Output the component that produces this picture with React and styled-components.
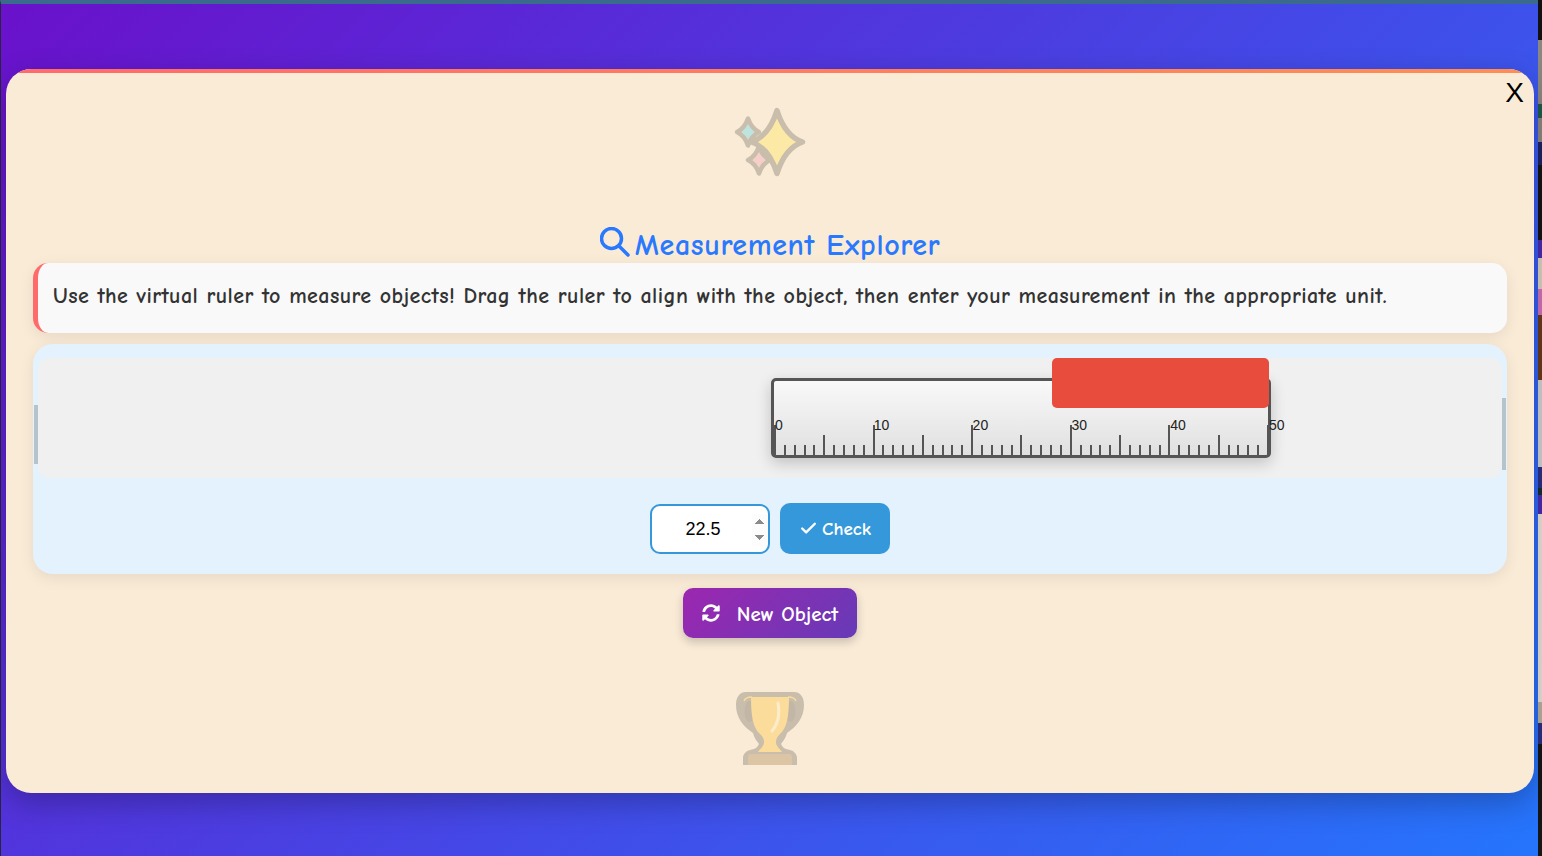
import styled, { createGlobalStyle } from "styled-components";
import { FaSyncAlt } from "react-icons/fa";
import { Check } from "lucide-react";

const GlobalStyle = createGlobalStyle`
  html, body {
    margin: 0;
    padding: 0;
    height: 100%;
    overflow: hidden;
    font-family: "Comic Sans MS", "Comic Neue", Lato, sans-serif;
  }
  * {
    box-sizing: border-box;
  }
`;

const Page = styled.div`
  width: 1542px;
  height: 856px;
  display: flex;
  overflow: hidden;
`;

const Main = styled.div`
  flex: 1;
  border-top: 4px solid #3a6a8c;
  border-left: 1px solid #2b2440;
  padding: 65px 4px 0 5px;
  background: linear-gradient(135deg, #6a11cb 0%, #2575fc 100%);
`;

const WindowEdge = styled.div`
  width: 4px;
  background: linear-gradient(
    180deg,
    #111 0 40px,
    #8a8780 40px 104px,
    #1f5c4c 104px 118px,
    #8a8780 118px 142px,
    #1c2460 142px 165px,
    #141414 165px 240px,
    #4a2bb0 240px 258px,
    #d8d0bc 258px 289px,
    #d070b8 289px 315px,
    #6a3a1c 315px 380px,
    #cfcfcf 380px 467px,
    #2a3080 467px 488px,
    #16302c 488px 495px,
    #4a2bb0 495px 514px,
    #e6e0d8 514px 702px,
    #b8ae9c 702px 723px,
    #2a3080 723px 744px,
    #161616 744px 856px
  );
`;

const Modal = styled.div`
  position: relative;
  height: 724px;
  padding: 33px 27px 0;
  border-radius: 25px;
  background: #faebd7;
  box-shadow: 0 10px 30px rgba(0, 0, 0, 0.25);
  overflow: hidden;
  display: flex;
  flex-direction: column;
  align-items: center;

  &::before {
    content: "";
    position: absolute;
    top: 0;
    left: 0;
    right: 0;
    height: 4px;
    background: linear-gradient(90deg, #ff6b6b, #ff8e53);
  }
`;

const CloseButton = styled.button`
  position: absolute;
  top: 8px;
  right: 10px;
  padding: 0;
  border: none;
  background: none;
  color: #000;
  font-family: "Liberation Sans", sans-serif;
  font-size: 28px;
  line-height: 32px;
  cursor: pointer;
`;

const Decoration = styled.svg`
  display: block;
  flex: none;
`;

const TrophyIcon = styled(Decoration)`
  margin-top: 52px;
`;

const Title = styled.h2`
  margin: 41px 0 0;
  width: 100%;
  height: 40px;
  padding-top: 4px;
  display: flex;
  align-items: center;
  justify-content: center;
  gap: 5px;
  color: #2979ff;
  font-size: 30px;
  font-weight: 700;
  letter-spacing: 0.65px;
  white-space: nowrap;
`;

const SearchIcon = styled.svg`
  flex: none;
  margin-top: -6px;
`;

const Intro = styled.p`
  width: 100%;
  height: 70px;
  margin: 0 0 11px;
  padding: 0 15px 4px;
  display: flex;
  align-items: center;
  border-left: 5px solid #ff6b6b;
  border-radius: 15px;
  background: #f9f9f9;
  box-shadow: 0 4px 15px rgba(0, 0, 0, 0.08);
  color: #333;
  font-size: 22px;
  font-weight: 700;
  letter-spacing: 0.43px;
  white-space: nowrap;
`;

const GamePanel = styled.section`
  position: relative;
  width: 100%;
  height: 230px;
  padding: 14px 5px 0;
  border-radius: 20px;
  background: #e3f2fd;
  box-shadow: 0 4px 15px rgba(0, 0, 0, 0.08);
`;

const SideBar = styled.div`
  position: absolute;
  width: 4px;
  background: #b5c3cc;
  ${(p) => (p.$side === "left" ? "left: 1px; top: 61px; height: 59px;" : "right: 1px; top: 54px; height: 72px;")}
`;

const Canvas = styled.div`
  position: relative;
  height: 120px;
  border-radius: 12px;
  background: #f0f0f0;
`;

const Ruler = styled.div`
  position: absolute;
  left: 733px;
  top: 20px;
  width: 500px;
  height: 80px;
  border: 3px solid #555;
  border-radius: 5px;
  background: linear-gradient(180deg, #f9f9f9, #e0e0e0);
  box-shadow: 0 5px 15px rgba(0, 0, 0, 0.2);
`;

const Ticks = styled.div`
  position: absolute;
  inset: 0 -1px 0 0;
  display: flex;
  justify-content: space-between;
  align-items: flex-end;
`;

const Tick = styled.span`
  width: 2px;
  height: ${(p) => p.$size}px;
  background: #555;
`;

const TickLabel = styled.span`
  position: absolute;
  top: 36px;
  color: #222;
  font-family: "Liberation Sans", sans-serif;
  font-size: 14px;
  line-height: 16px;
`;

const TargetObject = styled.div`
  position: absolute;
  left: 1014px;
  top: 0;
  width: 217px;
  height: 50px;
  border-radius: 5px;
  background: #e74c3c;
`;

const AnswerRow = styled.div`
  margin-top: 25px;
  display: flex;
  justify-content: center;
  align-items: center;
  gap: 10px;
`;

const AnswerInput = styled.input`
  width: 120px;
  height: 50px;
  padding: 9px 1px 7px 2px;
  border: 2px solid #3498db;
  border-radius: 10px;
  background: #fff;
  color: #000;
  font-family: "Liberation Sans", sans-serif;
  font-size: 18px;
  text-align: center;
  outline: none;

  &::-webkit-inner-spin-button {
    opacity: 1;
    height: 32px;
    width: 15px;
  }
`;

const CheckButton = styled.button`
  width: 110px;
  height: 51px;
  display: flex;
  align-items: center;
  justify-content: center;
  gap: 4px;
  border: none;
  border-radius: 10px;
  background: #3498db;
  color: #fff;
  font-family: inherit;
  font-size: 19px;
  font-weight: 700;
  cursor: pointer;
`;

const NewObjectButton = styled.button`
  flex: none;
  width: 174px;
  height: 50px;
  margin-top: 14px;
  padding-top: 2px;
  display: flex;
  align-items: center;
  justify-content: center;
  gap: 17px;
  border: none;
  border-radius: 10px;
  background: linear-gradient(135deg, #9c27b0, #673ab7);
  box-shadow: 0 4px 10px rgba(0, 0, 0, 0.2);
  color: #fff;
  font-family: inherit;
  font-size: 21px;
  font-weight: 700;
  cursor: pointer;

  svg {
    width: 18px;
    height: 18px;
    margin-top: -2px;
  }
`;

const Sparkles = () => (
  <Decoration width="80" height="80" viewBox="0 0 80 80">
    <g stroke="#c9bdac" strokeWidth="4.5" strokeLinejoin="round">
      <path fill="#bfe3df" d="M18 16.500Q21.500 26.500 29 30Q21.500 33.500 18 43.500Q14.500 33.500 7 30Q14.500 26.500 18 16.500Z" />
      <path fill="#f7cfc9" d="M29 44.500Q32.500 54.500 40 58Q32.500 61.500 29 71.500Q25.500 61.500 18 58Q25.500 54.500 29 44.500Z" />
      <path strokeWidth="5.500" fill="#fde9a6" d="M47 8.500Q55 34 72.500 40Q55 46 47 71.500Q39 46 21.500 40Q39 34 47 8.500Z" />
    </g>
  </Decoration>
);

const Trophy = () => (
  <TrophyIcon width="72" height="76" viewBox="0 0 72 76">
    <path
      fill="#c9bdac"
      d="M12 2H60C67 2 70 8 70 15C70 28 62 37 53 43C51 50 48 52 47 54C49 58 51 59 56 60C60 61 63 64 63 68V75H9V68C9 64 12 61 16 60C21 59 23 58 25 54C24 52 21 50 19 43C10 37 2 28 2 15C2 8 5 2 12 2Z"
    />
    <g fill="#c2b7a6">
      <ellipse cx="15.500" cy="21.500" rx="5" ry="10.500" />
      <ellipse cx="56.500" cy="21.500" rx="5" ry="10.500" />
    </g>
    <path fill="none" stroke="#fbdc9b" strokeWidth="1.500" d="M10 11C11 8 14 7 18 7M62 11C61 8 58 7 54 7" />
    <path
      fill="#fbdc9b"
      d="M17 7H55C55 26 53 38 46 44C43 47 42 49 42 52C42 56 45 58 48 62H24C27 58 30 56 30 52C30 49 29 47 26 44C19 38 17 26 17 7Z"
    />
    <path fill="none" stroke="#fdeccb" strokeWidth="3" strokeLinecap="round" d="M44 13C46 24 44 34 38 41" />
    <path fill="#dcc5a5" d="M14 75V67C14 65 15 64 17 64H55C57 64 58 65 58 67V75Z" />
  </TrophyIcon>
);

const tickSize = (i) => (i % 10 === 0 ? 30 : i % 5 === 0 ? 20 : 10);
const tickList = Array.from({ length: 51 }, (_, i) => i);
const labelList = [0, 10, 20, 30, 40, 50];

const App = () => {
  return (
    <Page>
      <GlobalStyle />
      <Main>
        <Modal>
          <CloseButton>X</CloseButton>
          <Sparkles />
          <Title>
            <SearchIcon width="30" height="30" viewBox="0 0 30 30" fill="none" stroke="#2979ff" strokeWidth="3.500" strokeLinecap="round">
              <circle cx="11.500" cy="11.500" r="10" />
              <line x1="19" y1="19" x2="28" y2="28" />
            </SearchIcon>
            Measurement Explorer
          </Title>
          <Intro>
            Use the virtual ruler to measure objects! Drag the ruler to align with the object, then enter your measurement in the appropriate unit.
          </Intro>
          <GamePanel>
            <SideBar $side="left" />
            <SideBar $side="right" />
            <Canvas>
              <Ruler>
                <Ticks>
                  {tickList.map((i) => (
                    <Tick key={i} $size={tickSize(i)} />
                  ))}
                </Ticks>
                {labelList.map((n) => (
                  <TickLabel key={n} style={{ left: n * 9.88 + 1 }}>
                    {n}
                  </TickLabel>
                ))}
              </Ruler>
              <TargetObject />
            </Canvas>
            <AnswerRow>
              <AnswerInput type="number" defaultValue="22.5" step="0.5" />
              <CheckButton>
                <Check size={19} strokeWidth={3} />
                Check
              </CheckButton>
            </AnswerRow>
          </GamePanel>
          <NewObjectButton>
            <FaSyncAlt />
            New Object
          </NewObjectButton>
          <Trophy />
        </Modal>
      </Main>
      <WindowEdge />
    </Page>
  );
};

export default App;
